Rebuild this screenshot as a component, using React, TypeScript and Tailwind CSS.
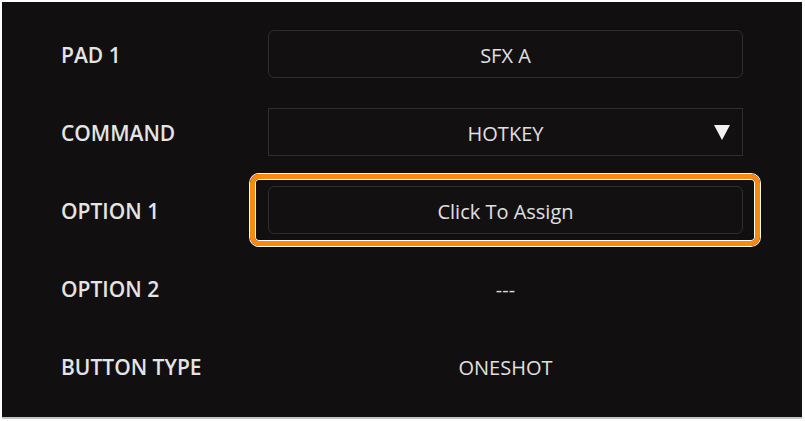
import React from "react";

const font = { fontFamily: '"Open Sans", "Noto Sans", sans-serif' };

function Row({ label, children }: { label: string; children: React.ReactNode }) {
  return (
    <div className="flex h-[78px] items-center">
      <div className="w-[266px] shrink-0 pl-[59px] pt-[3px] text-[21px] font-semibold text-[#e4e4e4]">{label}</div>
      <div className="flex w-[475px] shrink-0 justify-center">{children}</div>
    </div>
  );
}

export default function App() {
  return (
    <div className="h-[421px] w-[805px] bg-white pl-[2px] pt-[2px]" style={font}>
      <div className="h-[417px] w-[800px] border-b-2 border-[#c4c4c4] bg-[#110f10] pt-[13px]">
        <Row label="PAD 1">
          <div className="flex h-[48px] w-full items-center justify-center rounded-[6px] border border-[#2f2d2e] bg-[#121011] pt-[3px] text-[20px] text-[#e0e0e0]">
            SFX A
          </div>
        </Row>
        <Row label="COMMAND">
          <div className="relative flex h-[48px] w-full items-center justify-center border border-[#2f2d2e] bg-[#121011] pt-[3px] text-[20px] text-[#e0e0e0]">
            HOTKEY
            <svg className="absolute right-[12px] top-[16px]" width="16" height="15" viewBox="0 0 16 15">
              <polygon points="0,0 16,0 8,15" fill="#f2f2f2" />
            </svg>
          </div>
        </Row>
        <Row label="OPTION 1">
          <div className="relative w-full">
            <div className="flex h-[48px] w-full items-center justify-center rounded-[6px] border border-[#2f2d2e] bg-[#121011] pt-[3px] text-[20px] text-[#e0e0e0]">
              Click To Assign
            </div>
            <div className="pointer-events-none absolute -bottom-[12px] -left-[18px] -right-[17px] -top-[12px] rounded-[9px] border-[5px] border-[#fb8a0c] shadow-[0_0_0_1px_#ffffff,inset_0_0_0_1px_#ffffff]" />
          </div>
        </Row>
        <Row label="OPTION 2">
          <div className="pt-[3px] text-[20px] text-[#d8d8d8]">---</div>
        </Row>
        <Row label="BUTTON TYPE">
          <div className="pt-[3px] text-[20px] text-[#e0e0e0]">ONESHOT</div>
        </Row>
      </div>
    </div>
  );
}
